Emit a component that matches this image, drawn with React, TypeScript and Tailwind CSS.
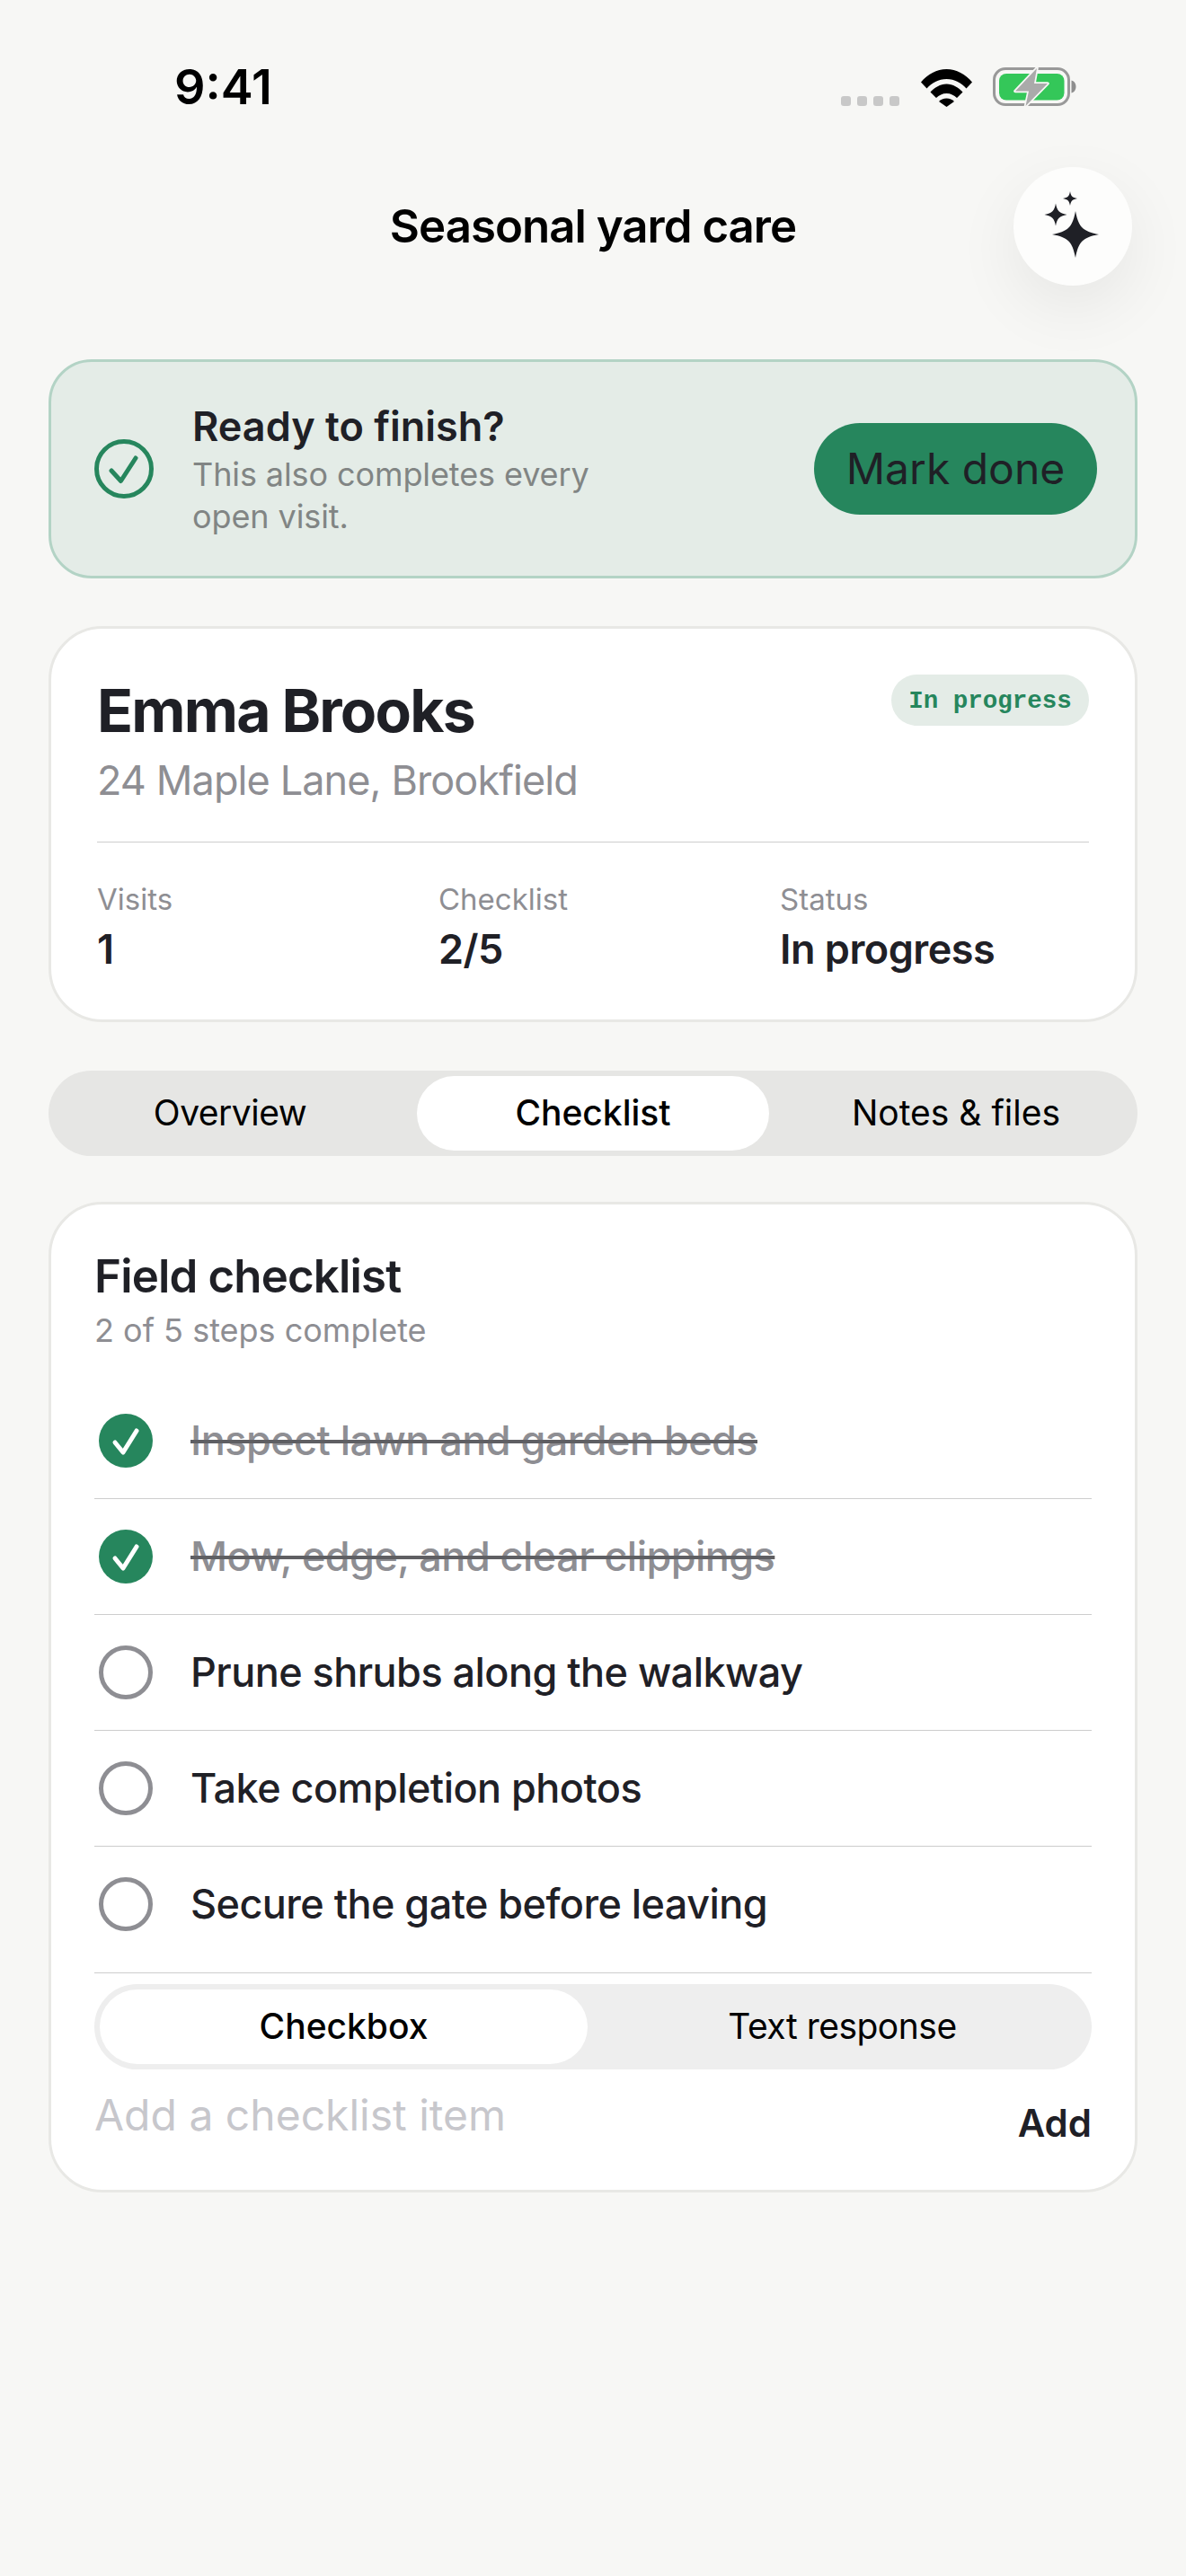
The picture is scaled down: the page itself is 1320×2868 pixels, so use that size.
import React from "react";

const star = (cx: number, cy: number, r: number) => {
  const a = 0.13 * r;
  const b = 0.13 * r;
  return `M${cx} ${cy - r}C${cx + a} ${cy - b * 2.4} ${cx + b * 2.4} ${cy - a} ${cx + r} ${cy}C${cx + b * 2.4} ${cy + a} ${cx + a} ${cy + b * 2.4} ${cx} ${cy + r}C${cx - a} ${cy + b * 2.4} ${cx - b * 2.4} ${cy + a} ${cx - r} ${cy}C${cx - b * 2.4} ${cy - a} ${cx - a} ${cy - b * 2.4} ${cx} ${cy - r}Z`;
};

function Wifi() {
  return (
    <svg width="57" height="42" viewBox="0 0 57 42" className="block">
      <path d="M0 14.5C7.5 5.5 17.5 0 28.5 0S49.500 5.500 57 14.500L50.500 21.500C45 15.500 37.500 11 28.500 11S12 15.500 6.500 21.500Z" fill="#000" />
      <path d="M10.500 25.500C15 20.500 21.500 16.500 28.500 16.500S42 20.500 46.500 25.500L40 32C37 29 33 27 28.500 27S20 29 17 32Z" fill="#000" />
      <path d="M20 36C22 33.800 25 32.500 28.500 32.500S35 33.800 37 36L28.500 42Z" fill="#000" />
    </svg>
  );
}

function Battery() {
  return (
    <svg width="93" height="44" viewBox="0 0 93 44" className="block">
      <rect x="1.500" y="1.500" width="83" height="40" rx="12.500" fill="none" stroke="#999" strokeWidth="3" />
      <rect x="7" y="7" width="72.500" height="29.500" rx="8" fill="#34c759" />
      <path d="M87.500 14.500C91 15.500 92.500 18.500 92.500 21.500S91 27.500 87.500 28.500Z" fill="#8e8e8e" />
      <path d="M49 1L25 26.500H40L36.500 43L61 18H46Z" fill="#aaa" stroke="#f7f7f5" strokeWidth="3.500" strokeLinejoin="round" paintOrder="stroke" />
    </svg>
  );
}

function Sparkles() {
  return (
    <svg width="132" height="132" viewBox="0 0 132 132" className="block">
      <path d={star(69, 75, 26)} fill="#1f2026" />
      <path d={star(47, 53, 12.5)} fill="#1f2026" />
      <path d={star(63, 35, 8)} fill="#1f2026" />
    </svg>
  );
}

function Row({ text, done, last }: { text: string; done?: boolean; last?: boolean }) {
  return (
    <div className={`flex items-center gap-[42px] pl-[5px] ${last ? "h-[127.500px]" : "h-[129px] border-b-[1.500px] border-[#cdcdcd]"}`}>
      {done ? (
        <svg width="60" height="60" viewBox="0 0 60 60" className="block shrink-0">
          <circle cx="30" cy="30" r="30" fill="#26865d" />
          <path d="M18 32L27 43L42 19" fill="none" stroke="#fff" strokeWidth="5" strokeLinecap="round" strokeLinejoin="round" />
        </svg>
      ) : (
        <div className="h-[60px] w-[60px] shrink-0 rounded-full border-[5px] border-[#8e8e93]" />
      )}
      <span className={`text-[45px] font-medium leading-[54px] tracking-[-0.55px] ${done ? "text-[#8e8e93] line-through decoration-[#5f5f63] decoration-[4px]" : "text-[#1f2026]"}`}>
        {text}
      </span>
    </div>
  );
}

export default function App() {
  return (
    <div className="min-h-[2868px] w-[1320px] bg-[#f7f7f5] font-['Inter',sans-serif] text-[#1f2026]">
      <div className="flex h-[186px] items-start justify-between pl-[194px] pr-[122px]">
        <span className="mt-[70px] text-[54px] font-semibold leading-[54px] text-black">9:41</span>
        <div className="mt-[75px] flex items-end">
          <div className="mb-[1px] flex gap-[7px]">
            <i className="block h-[11px] w-[11px] rounded-[3px] bg-[#c8c8c8]" />
            <i className="block h-[11px] w-[11px] rounded-[3px] bg-[#c8c8c8]" />
            <i className="block h-[11px] w-[11px] rounded-[3px] bg-[#c8c8c8]" />
            <i className="block h-[11px] w-[11px] rounded-[3px] bg-[#c8c8c8]" />
          </div>
          <div className="ml-[24px]"><Wifi /></div>
          <div className="ml-[23px]"><Battery /></div>
        </div>
      </div>

      <div className="grid grid-cols-[132px_1fr_132px] items-center px-[60px]">
        <div />
        <div className="text-center text-[51px] font-semibold leading-[60px] tracking-[-1px] text-black">Seasonal yard care</div>
        <button className="flex h-[132px] w-[132px] items-center justify-center rounded-full bg-[#fdfdfc] shadow-[0_24px_72px_rgba(0,0,0,0.07)]">
          <Sparkles />
        </button>
      </div>

      <div className="px-[54px]">
        <div className="mt-[82px] flex h-[244px] items-center rounded-[48px] border-[3px] border-[#b3d3c5] bg-[#e4ece7] pl-[48px] pr-[42px]">
          <svg width="66" height="66" viewBox="0 0 66 66" className="block shrink-0">
            <circle cx="33" cy="33" r="30.500" fill="none" stroke="#26865d" strokeWidth="5" />
            <path d="M19 35L29.500 46.500L46 21" fill="none" stroke="#26865d" strokeWidth="5" strokeLinecap="round" strokeLinejoin="round" />
          </svg>
          <div className="ml-[43px] w-[480px] pt-[3px]">
            <div className="text-[45px] font-semibold leading-[54px]">Ready to finish?</div>
            <div className="mt-[3px] text-[36px] leading-[47.500px] tracking-[-0.1px] text-[#818584]">This also completes every open visit.</div>
          </div>
          <button className="ml-auto flex h-[102px] w-[315px] items-center justify-center rounded-full bg-[#26865d] text-[48px] leading-[60px]">Mark done</button>
        </div>

        <div className="mt-[53px] h-[441px] rounded-[60px] border-[3px] border-[#e8e8e5] bg-white px-[51px]">
          <div className="flex items-start justify-between">
            <div>
              <div className="mt-[52px] text-[66px] font-bold leading-[78px] tracking-[-1.800px]">Emma Brooks</div>
              <div className="mt-[11px] text-[45px] leading-[56px] tracking-[-0.9px] text-[#8e8e93]">24 Maple Lane, Brookfield</div>
            </div>
            <div className="mt-[51px] flex h-[57px] w-[220px] items-center justify-center rounded-full bg-[#e4ece7] pt-[2px] font-['Liberation_Mono',monospace] text-[27.500px] font-bold text-[#26865d]">In progress</div>
          </div>
          <div className="mt-[40px] border-t-[1.500px] border-[#cdcdcd]" />
          <div className="mt-[42px] grid grid-cols-[380px_380px_1fr]">
            <div>
              <div className="text-[33px] leading-[42px] text-[#8e8e93]">Visits</div>
              <div className="mt-[8px] text-[45px] font-semibold leading-[54px] tracking-[-0.5px]">1</div>
            </div>
            <div>
              <div className="text-[33px] leading-[42px] text-[#8e8e93]">Checklist</div>
              <div className="mt-[8px] text-[45px] font-semibold leading-[54px] tracking-[-0.5px]">2/5</div>
            </div>
            <div>
              <div className="text-[33px] leading-[42px] text-[#8e8e93]">Status</div>
              <div className="mt-[8px] text-[45px] font-semibold leading-[54px] tracking-[-0.5px]">In progress</div>
            </div>
          </div>
        </div>

        <div className="mt-[54px] grid h-[95px] grid-cols-3 gap-[12px] rounded-[48px] bg-[#e6e6e4] p-[6px] text-[39px] text-black">
          <div className="flex items-center justify-center tracking-[-0.5px]">Overview</div>
          <div className="flex items-center justify-center rounded-[42px] bg-white font-medium">Checklist</div>
          <div className="flex items-center justify-center">Notes &amp; files</div>
        </div>

        <div className="mt-[51px] h-[1103px] rounded-[60px] border-[3px] border-[#e8e8e5] bg-white px-[48px]">
          <div className="pt-[50px] text-[51px] font-semibold leading-[60px] tracking-[-0.85px]">Field checklist</div>
          <div className="mt-[7px] text-[36px] leading-[46px] text-[#8e8e93]">2 of 5 steps complete</div>
          <div className="mt-[36px]">
            <Row text="Inspect lawn and garden beds" done />
            <Row text="Mow, edge, and clear clippings" done />
            <Row text="Prune shrubs along the walkway" />
            <Row text="Take completion photos" />
            <Row text="Secure the gate before leaving" last />
          </div>
          <div className="mt-[12.500px] border-t-[1.500px] border-[#cdcdcd] pt-[12px]">
            <div className="grid h-[95px] grid-cols-2 gap-[12px] rounded-[48px] bg-[#eeeeee] p-[6px] text-[39px] text-black">
              <div className="flex items-center justify-center rounded-[42px] bg-white font-medium">Checkbox</div>
              <div className="flex items-center justify-center tracking-[-0.5px]">Text response</div>
            </div>
            <div className="mt-[23px] flex items-start justify-between">
              <span className="text-[48px] leading-[56px] text-[#c7c7cc]">Add a checklist item</span>
              <span className="mt-[12px] text-[42px] font-semibold leading-[50px]">Add</span>
            </div>
          </div>
        </div>
      </div>
    </div>
  );
}
